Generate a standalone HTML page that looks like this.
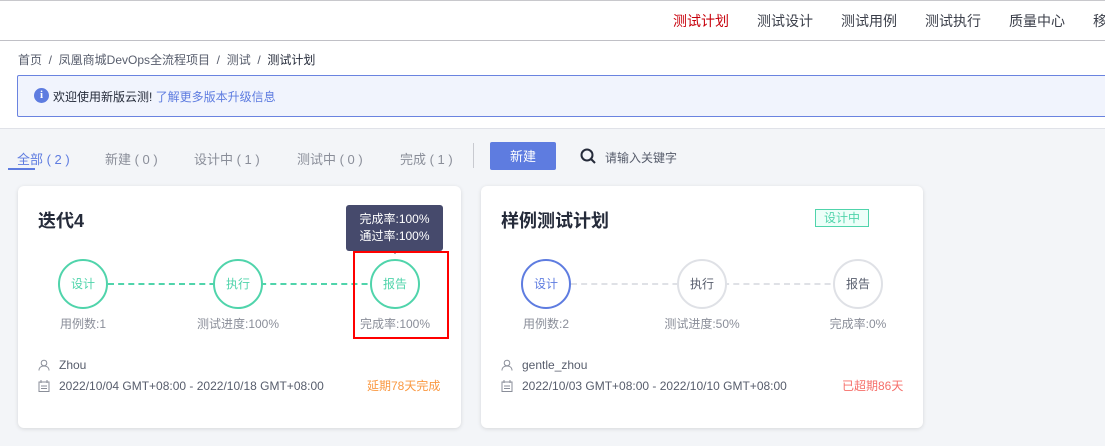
<!DOCTYPE html>
<html><head><meta charset="utf-8"><style>
*{margin:0;padding:0;box-sizing:border-box}
body{width:1105px;height:446px;overflow:hidden;font-family:"Liberation Sans","Noto Sans CJK SC",sans-serif;background:#f3f5f8;position:relative;color:#252b3a}
.a{position:absolute;white-space:nowrap}
.top{left:0;top:0;width:1105px;height:41px;background:#fff;border-top:1px solid #c8c8cc;border-bottom:1px solid #c0c0c6}
.nav{top:11px;font-size:14px;color:#3b3f4a}
.wh{left:0;top:41px;width:1105px;height:88px;background:#fff;border-bottom:1px solid #e0e2e8}
.bc{top:51px;font-size:12px;color:#575d6c}
.ban{left:17px;top:75px;width:1100px;height:42px;background:#f1f4fd;border:1px solid #6a83e0;border-radius:2px}
.tab{top:149px;font-size:13px;color:#8a8e99}
.card{background:#fff;border-radius:6px;box-shadow:0 1px 4px rgba(0,0,0,.12);width:443px;height:242px;top:186px}
.c{width:50px;height:50px;border-radius:50%;border:2px solid #50d4ab;color:#50d4ab;font-size:12px;text-align:center;line-height:46px;background:#fff}
.g{border-color:#dfe1e6;color:#575d6c}
.l{font-size:12px;color:#8a8e99;transform:translateX(-50%)}
.dash{height:0;border-top:2px dashed #50d4ab}
.tt{font-size:12px;color:#575d6c}
</style></head><body>
<div class="a top"></div>
<div class="a nav" style="left:673px;color:#c7000b">测试计划</div>
<div class="a nav" style="left:757px">测试设计</div>
<div class="a nav" style="left:841px">测试用例</div>
<div class="a nav" style="left:925px">测试执行</div>
<div class="a nav" style="left:1009px">质量中心</div>
<div class="a nav" style="left:1093px">移</div>
<div class="a wh"></div>
<div class="a bc" style="left:18px">首页 &nbsp;/&nbsp; 凤凰商城DevOps全流程项目 &nbsp;/&nbsp; 测试 &nbsp;/&nbsp; <span style="color:#252b3a">测试计划</span></div>
<div class="a ban"></div>
<div class="a" style="left:34px;top:88px;width:15px;height:15px;border-radius:50%;background:#5e7ce0;color:#fff;font-size:11px;font-weight:bold;text-align:center;line-height:15px;font-family:'Liberation Serif',serif">i</div>
<div class="a" style="left:53px;top:88px;font-size:12px;color:#252b3a">欢迎使用新版云测! <span style="color:#5e7ce0">了解更多版本升级信息</span></div>
<div class="a tab" style="left:17px;color:#5e7ce0">全部 ( 2 )</div>
<div class="a" style="left:8px;top:168px;width:27px;height:2px;background:#5e7ce0"></div>
<div class="a tab" style="left:105px">新建 ( 0 )</div>
<div class="a tab" style="left:194px">设计中 ( 1 )</div>
<div class="a tab" style="left:297px">测试中 ( 0 )</div>
<div class="a tab" style="left:400px">完成 ( 1 )</div>
<div class="a" style="left:473px;top:143px;width:1px;height:25px;background:#c8cad0"></div>
<div class="a" style="left:490px;top:142px;width:66px;height:28px;background:#5e7ce0;color:#fff;font-size:13px;text-align:center;line-height:29px;border-radius:2px">新建</div>
<svg class="a" style="left:580px;top:148px" width="16" height="16" viewBox="0 0 16 16"><circle cx="7" cy="7" r="5.5" fill="none" stroke="#252b3a" stroke-width="2"/><path d="M11 11l4 4" stroke="#252b3a" stroke-width="2"/></svg>
<div class="a" style="left:605px;top:149px;font-size:12px;color:#575d6c">请输入关键字</div>

<div class="a card" style="left:18px"></div>
<div class="a" style="left:38px;top:207px;font-size:18px;font-weight:bold;color:#252b3a">迭代4</div>
<div class="a dash" style="left:108px;top:283px;width:290px"></div>
<div class="a c" style="left:58px;top:259px">设计</div>
<div class="a c" style="left:213px;top:259px">执行</div>
<div class="a c" style="left:370px;top:259px">报告</div>
<div class="a l" style="left:83px;top:315px">用例数:1</div>
<div class="a l" style="left:238px;top:315px">测试进度:100%</div>
<div class="a l" style="left:395px;top:315px">完成率:100%</div>
<div class="a" style="left:346px;top:205px;width:97px;height:46px;background:#464a6c;border-radius:3px;color:#fff;font-size:12px;text-align:center;line-height:17px;padding-top:6px">完成率:100%<br>通过率:100%</div>
<div class="a" style="left:391px;top:250px;width:0;height:0;border:4px solid transparent;border-top-color:#464a6c"></div>
<div class="a" style="left:353px;top:251px;width:96px;height:88px;border:2px solid #f00"></div>
<svg class="a" style="left:38px;top:359px" width="12" height="12" viewBox="0 0 12 12" fill="none" stroke="#8a8e99"><circle cx="6" cy="4" r="2.8"/><path d="M1 11.5c0-3 2.2-4.5 5-4.5s5 1.5 5 4.5"/></svg>
<div class="a tt" style="left:59px;top:358px">Zhou</div>
<svg class="a" style="left:38px;top:380px" width="12" height="12" viewBox="0 0 12 12" fill="none" stroke="#8a8e99"><rect x="1" y="2" width="10" height="9.5"/><path d="M3 0v3M9 0v3M3 6h6M3 8.5h6"/></svg>
<div class="a tt" style="left:59px;top:379px">2022/10/04 GMT+08:00 - 2022/10/18 GMT+08:00</div>
<div class="a" style="left:367px;top:377px;font-size:12px;color:#fa9841">延期78天完成</div>

<div class="a card" style="left:481px;width:442px"></div>
<div class="a" style="left:501px;top:207px;font-size:18px;font-weight:bold;color:#252b3a">样例测试计划</div>
<div class="a" style="left:815px;top:209px;width:54px;height:18px;border:1px solid #50d4ab;background:#edfff9;color:#50d4ab;font-size:12px;text-align:center;line-height:16px">设计中</div>
<div class="a dash" style="left:571px;top:283px;width:290px;border-color:#dfe1e6"></div>
<div class="a c" style="left:521px;top:259px;border-color:#5e7ce0;color:#5e7ce0">设计</div>
<div class="a c g" style="left:677px;top:259px">执行</div>
<div class="a c g" style="left:833px;top:259px">报告</div>
<div class="a l" style="left:546px;top:315px">用例数:2</div>
<div class="a l" style="left:702px;top:315px">测试进度:50%</div>
<div class="a l" style="left:858px;top:315px">完成率:0%</div>
<svg class="a" style="left:501px;top:359px" width="12" height="12" viewBox="0 0 12 12" fill="none" stroke="#8a8e99"><circle cx="6" cy="4" r="2.8"/><path d="M1 11.5c0-3 2.2-4.5 5-4.5s5 1.5 5 4.5"/></svg>
<div class="a tt" style="left:522px;top:358px">gentle_zhou</div>
<svg class="a" style="left:501px;top:380px" width="12" height="12" viewBox="0 0 12 12" fill="none" stroke="#8a8e99"><rect x="1" y="2" width="10" height="9.5"/><path d="M3 0v3M9 0v3M3 6h6M3 8.5h6"/></svg>
<div class="a tt" style="left:522px;top:379px">2022/10/03 GMT+08:00 - 2022/10/10 GMT+08:00</div>
<div class="a" style="left:842px;top:377px;font-size:12px;color:#f66f6a">已超期86天</div>
</body></html>
